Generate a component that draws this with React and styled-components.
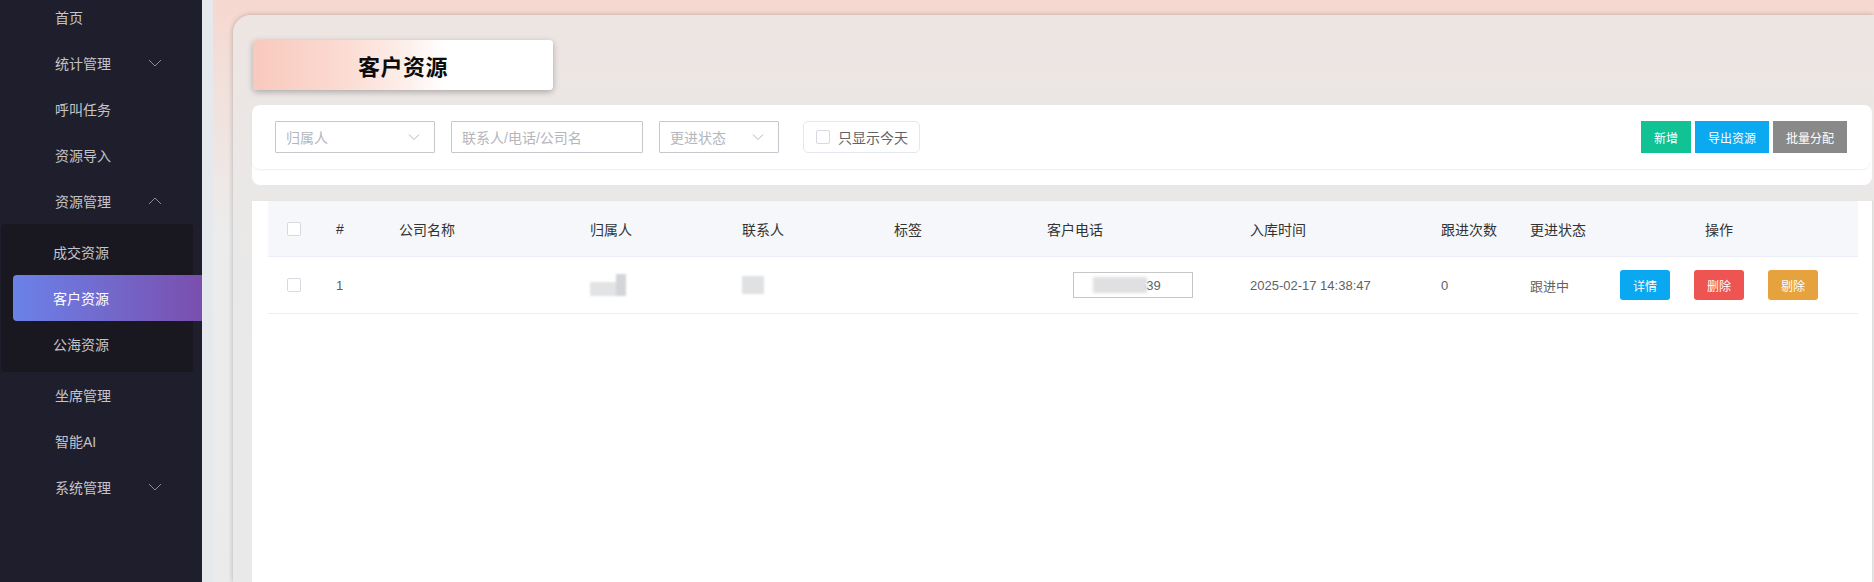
import React from 'react';
import styled, { createGlobalStyle } from 'styled-components';

const GlobalStyle = createGlobalStyle`
  html, body { margin: 0; padding: 0; height: 100%; overflow: hidden; }
  body { font-family: "Liberation Sans", "Noto Sans CJK SC", sans-serif; }
  #root { height: 100%; }
  *, *::before, *::after { box-sizing: border-box; }
`;

const Layout = styled.div`
  display: flex;
  height: 100vh;
  overflow: hidden;
`;

/* ---------- Sidebar ---------- */
const Sidebar = styled.aside`
  width: 202px;
  flex-shrink: 0;
  background: #1f1e2c;
`;
const Menu = styled.ul`
  list-style: none;
  margin: -6px 0 0;
  padding: 0;
`;
const MenuItem = styled.li`
  height: 46px;
  display: flex;
  align-items: center;
  padding: 0 40px 0 55px;
  color: #c4c4ca;
  font-size: 14px;
`;
const ChevronSvg = styled.svg`
  margin-left: auto;
  width: 14px;
  height: 14px;
`;
const Chevron = ({ up }) => (
  <ChevronSvg viewBox="0 0 14 14">
    <polyline
      points={up ? '1,10 7,4 13,10' : '1,4 7,10 13,4'}
      fill="none"
      stroke="#8c8c98"
      strokeWidth="1"
    />
  </ChevronSvg>
);
const SubMenu = styled.ul`
  list-style: none;
  margin: 0 9px 0 1px;
  padding: 5px 0;
  background: #191821;
  border-radius: 4px;
`;
const SubItem = styled.li`
  height: 46px;
  display: flex;
  align-items: center;
  font-size: 14px;
  padding-left: ${(p) => (p.$active ? '40px' : '52px')};
  margin: ${(p) => (p.$active ? '0 -9px 0 12px' : '0')};
  color: ${(p) => (p.$active ? '#ffffff' : '#c4c4ca')};
  background: ${(p) => (p.$active ? 'linear-gradient(90deg, #6b82e9 0%, #7a4fae 100%)' : 'transparent')};
  border-radius: ${(p) => (p.$active ? '4px 0 0 4px' : '0')};
`;

const Strip = styled.div`
  width: 11px;
  flex-shrink: 0;
  background: #e5e8ed;
`;

/* ---------- Main ---------- */
const Main = styled.main`
  flex: 1;
  min-width: 0;
  display: flex;
  flex-direction: column;
  padding: 15px 0 0 20px;
  background: linear-gradient(180deg, #f6d8cf 0%, #f2dfd9 12%, #ececec 40%, #ebebeb 100%);
`;
const Card = styled.section`
  flex: 1;
  display: flex;
  flex-direction: column;
  padding: 25px 2px 0 19px;
  border-top-left-radius: 18px;
  background: linear-gradient(180deg, #ede5e2 0%, #eae8e7 30%, #e9e9e9 60%);
  box-shadow: 0 0 5px rgba(0, 0, 0, 0.25);
`;
const TitleTab = styled.div`
  width: 300px;
  height: 50px;
  margin-left: 1px;
  display: flex;
  align-items: center;
  justify-content: center;
  border-radius: 4px;
  background: linear-gradient(90deg, #f8c9bd 0%, #fbdbd2 30%, #fdeee9 50%, #ffffff 64%, #ffffff 100%);
  box-shadow: 0 2px 6px rgba(0, 0, 0, 0.28);
  font-size: 22px;
  font-weight: 700;
  color: #0d0d0d;
  letter-spacing: 0.5px;
`;

const FilterBox = styled.div`
  margin-top: 15px;
  height: 80px;
  background: #ffffff;
  border-radius: 8px;
`;
const FilterRow = styled.div`
  height: 64px;
  margin-right: 2px;
  display: flex;
  align-items: center;
  padding: 0 23px 0 23px;
  border-radius: 8px;
  box-shadow: 0 1px 2px rgba(0, 0, 0, 0.07);
`;
const Field = styled.div`
  width: ${(p) => p.$w}px;
  height: 32px;
  margin-right: ${(p) => p.$gap || 16}px;
  display: flex;
  align-items: center;
  padding: 0 14px 0 10px;
  border: 1px solid #c6c8cd;
  border-radius: 1px;
  font-size: 14px;
  color: #b4b6bb;
  flex-shrink: 0;
`;
const FieldChevron = styled.svg`
  margin-left: auto;
  width: 12px;
  height: 12px;
`;
const SelectArrow = () => (
  <FieldChevron viewBox="0 0 12 12">
    <polyline points="1,3.5 6,8.5 11,3.5" fill="none" stroke="#b4b6bb" strokeWidth="1" />
  </FieldChevron>
);
const TodayBox = styled.label`
  width: 117px;
  height: 32px;
  display: flex;
  align-items: center;
  gap: 8px;
  padding-left: 12px;
  border: 1px solid #e4e7ed;
  border-radius: 5px;
  font-size: 14px;
  color: #606266;
`;
const Check = styled.span`
  width: 14px;
  height: 14px;
  flex-shrink: 0;
  border: 1px solid #d6d9df;
  border-radius: 2px;
  background: #fff;
`;
const Actions = styled.div`
  margin-left: auto;
  display: flex;
  gap: 4px;
`;
const TopButton = styled.button`
  width: ${(p) => p.$w}px;
  height: 32px;
  border: none;
  border-radius: 0;
  background: ${(p) => p.$bg};
  color: #fff;
  font-size: 12px;
  font-family: inherit;
  padding: 0;
`;

/* ---------- Table ---------- */
const TablePanel = styled.div`
  margin-top: 16px;
  flex: 1;
  background: #ffffff;
  padding: 0 14px 0 16px;
  box-shadow: 1px 0 1px rgba(0, 0, 0, 0.05);
`;
const columns = '56px 63px 191px 152px 152px 153px 203px 191px 89px 89px 224px 1fr';
const Row = styled.div`
  display: grid;
  grid-template-columns: ${columns};
  height: ${(p) => (p.$head ? 56 : 57)}px;
  background: ${(p) => (p.$head ? '#f5f7fa' : '#ffffff')};
  border-bottom: 1px solid #ebeef5;
  font-size: ${(p) => (p.$head ? 14 : 13)}px;
  color: ${(p) => (p.$head ? '#333333' : '#606266')};
`;
const Cell = styled.div`
  display: flex;
  align-items: center;
  justify-content: ${(p) => (p.$center ? 'center' : 'flex-start')};
  padding-left: ${(p) => (p.$center ? 0 : 12)}px;
  padding-right: ${(p) => p.$pr || 0}px;
  gap: ${(p) => p.$gap || 0}px;
  white-space: nowrap;
`;
const Mosaic = styled.span`
  display: inline-flex;
  align-items: flex-end;
  filter: blur(1px);
`;
const Patch = styled.span`
  display: block;
  width: ${(p) => p.$w}px;
  height: ${(p) => p.$h}px;
  background: ${(p) => p.$c || '#dcdde0'};
`;
const PhoneBox = styled.div`
  width: 120px;
  height: 26px;
  margin-left: 26px;
  display: flex;
  align-items: center;
  padding-left: 19px;
  border: 1px solid #c6c6c6;
  color: #606266;
  font-size: 13px;
`;
const PhoneBlur = styled.span`
  width: 54px;
  height: 16px;
  margin-right: -8px;
  background: #e0e0e2;
  filter: blur(1.5px);
  position: relative;
  z-index: 1;
`;
const RowButton = styled.button`
  width: 50px;
  height: 30px;
  border: none;
  border-radius: 3px;
  background: ${(p) => p.$bg};
  color: #fff;
  font-size: 12px;
  font-family: inherit;
  padding: 0;
`;

const headers = ['#', '公司名称', '归属人', '联系人', '标签', '客户电话', '入库时间', '跟进次数', '更进状态'];

export default function App() {
  return (
    <>
      <GlobalStyle />
      <Layout>
        <Sidebar>
          <Menu>
            <MenuItem>首页</MenuItem>
            <MenuItem>统计管理<Chevron /></MenuItem>
            <MenuItem>呼叫任务</MenuItem>
            <MenuItem>资源导入</MenuItem>
            <MenuItem>资源管理<Chevron up /></MenuItem>
            <li>
              <SubMenu>
                <SubItem>成交资源</SubItem>
                <SubItem $active>客户资源</SubItem>
                <SubItem>公海资源</SubItem>
              </SubMenu>
            </li>
            <MenuItem>坐席管理</MenuItem>
            <MenuItem>智能AI</MenuItem>
            <MenuItem>系统管理<Chevron /></MenuItem>
          </Menu>
        </Sidebar>
        <Strip />
        <Main>
          <Card>
            <TitleTab>客户资源</TitleTab>
            <FilterBox>
              <FilterRow>
                <Field $w={160}>归属人<SelectArrow /></Field>
                <Field $w={192}>联系人/电话/公司名</Field>
                <Field $w={120} $gap={24}>更进状态<SelectArrow /></Field>
                <TodayBox><Check />只显示今天</TodayBox>
                <Actions>
                  <TopButton $w={50} $bg="#10c294">新增</TopButton>
                  <TopButton $w={74} $bg="#0aa9f0">导出资源</TopButton>
                  <TopButton $w={74} $bg="#898989">批量分配</TopButton>
                </Actions>
              </FilterRow>
            </FilterBox>
            <TablePanel>
              <Row $head>
                <Cell $center $pr={4}><Check /></Cell>
                {headers.map((h) => (
                  <Cell key={h}>{h}</Cell>
                ))}
                <Cell $center>操作</Cell>
                <Cell />
              </Row>
              <Row>
                <Cell $center $pr={4}><Check /></Cell>
                <Cell>1</Cell>
                <Cell />
                <Cell>
                  <Mosaic>
                    <Patch $w={26} $h={14} $c="#e2e3e5" />
                    <Patch $w={10} $h={22} $c="#d3d5d8" />
                  </Mosaic>
                </Cell>
                <Cell>
                  <Mosaic>
                    <Patch $w={22} $h={18} $c="#e0e1e3" />
                  </Mosaic>
                </Cell>
                <Cell />
                <Cell>
                  <PhoneBox><PhoneBlur />539</PhoneBox>
                </Cell>
                <Cell>2025-02-17 14:38:47</Cell>
                <Cell>0</Cell>
                <Cell>跟进中</Cell>
                <Cell $center $gap={24}>
                  <RowButton $bg="#09a8f0">详情</RowButton>
                  <RowButton $bg="#ee5552">删除</RowButton>
                  <RowButton $bg="#e6a23c">剔除</RowButton>
                </Cell>
                <Cell />
              </Row>
            </TablePanel>
          </Card>
        </Main>
      </Layout>
    </>
  );
}
